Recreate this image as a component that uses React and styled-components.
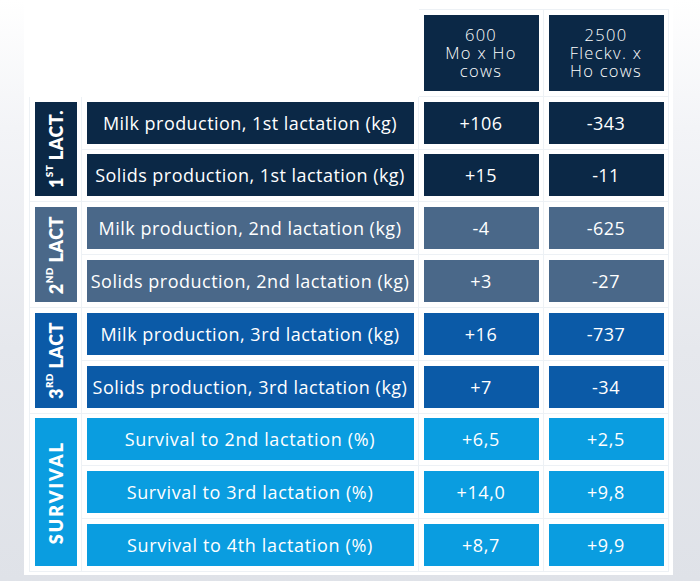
import styled, { createGlobalStyle } from "styled-components";

const GlobalStyle = createGlobalStyle`
  html, body {
    margin: 0;
    padding: 0;
  }
  body {
    width: 700px;
    height: 581px;
    overflow: hidden;
    font-family: "Open Sans", Lato, sans-serif;
    background: linear-gradient(180deg, #ffffff 0%, #f3f4f7 22%, #e6e8ed 60%, #dfe2e8 100%);
  }
`;

const Panel = styled.div`
  margin-left: 24px;
  width: 649px;
  height: 575px;
  box-sizing: border-box;
  padding: 9px 4px 0 5px;
  background: #ffffff;
`;

const Table = styled.table`
  border-collapse: collapse;
  border-spacing: 0;
`;

const Cell = styled.td`
  padding: 4.9px 4.5px;
  border: 1px solid ${(p) => (p.$blank ? "transparent" : "#edf1f5")};
  vertical-align: top;
`;

const HeadBox = styled.div`
  width: 115px;
  height: 76px;
  background: #0b2846;
  color: #ffffff;
  font-weight: 300;
  font-size: 16.5px;
  letter-spacing: 1.3px;
  display: flex;
  flex-direction: column;
  align-items: center;
  justify-content: center;
  text-align: center;

  span {
    display: block;
    line-height: 18px;
  }
`;

const SideBox = styled.div`
  width: 42px;
  height: ${(p) => p.$rows * 42 + (p.$rows - 1) * 10.8}px;
  background: ${(p) => p.$bg};
  display: flex;
  align-items: center;
  justify-content: center;
`;

const SideText = styled.span`
  writing-mode: vertical-rl;
  transform: rotate(180deg);
  color: #ffffff;
  font-family: Lato, "Open Sans", sans-serif;
  font-weight: 800;
  font-size: 18px;
  letter-spacing: ${(p) => p.$spacing || "0.5px"};
  white-space: nowrap;

  sup {
    font-size: 10px;
    font-weight: 800;
    vertical-align: 7px;
    line-height: 0;
    letter-spacing: 0.3px;
  }
`;

const Box = styled.div`
  width: ${(p) => p.$w}px;
  height: 42px;
  background: ${(p) => p.$bg};
  color: #ffffff;
  font-size: 18px;
  letter-spacing: ${(p) => p.$track}px;
  display: flex;
  align-items: center;
  justify-content: center;
  white-space: nowrap;
`;

const groups = [
  {
    bg: "#0b2846",
    side: <>1<sup>ST</sup> LACT.</>,
    track: 0.45,
    rows: [
      ["Milk production, 1st lactation (kg)", "+106", "-343"],
      ["Solids production, 1st lactation (kg)", "+15", "-11"],
    ],
  },
  {
    bg: "#4a6889",
    side: <>2<sup>ND</sup> LACT</>,
    track: 0.5,
    rows: [
      ["Milk production, 2nd lactation (kg)", "-4", "-625"],
      ["Solids production, 2nd lactation (kg)", "+3", "-27"],
    ],
  },
  {
    bg: "#0b5aa7",
    side: <>3<sup>RD</sup> LACT</>,
    track: 0.5,
    rows: [
      ["Milk production, 3rd lactation (kg)", "+16", "-737"],
      ["Solids production, 3rd lactation (kg)", "+7", "-34"],
    ],
  },
  {
    bg: "#0a9de0",
    side: "SURVIVAL",
    spacing: "2px",
    track: 0.65,
    rows: [
      ["Survival to 2nd lactation (%)", "+6,5", "+2,5"],
      ["Survival to 3rd lactation (%)", "+14,0", "+9,8"],
      ["Survival to 4th lactation (%)", "+8,7", "+9,9"],
    ],
  },
];

export default function App() {
  return (
    <>
      <GlobalStyle />
      <Panel>
        <Table>
          <tbody>
            <tr>
              <Cell colSpan={2} $blank />
              <Cell>
                <HeadBox>
                  <span>600</span>
                  <span>Mo x Ho</span>
                  <span>cows</span>
                </HeadBox>
              </Cell>
              <Cell>
                <HeadBox>
                  <span>2500</span>
                  <span>Fleckv. x</span>
                  <span>Ho cows</span>
                </HeadBox>
              </Cell>
            </tr>
            {groups.map((g, gi) =>
              g.rows.map((r, ri) => (
                <tr key={`${gi}-${ri}`}>
                  {ri === 0 && (
                    <Cell rowSpan={g.rows.length}>
                      <SideBox $bg={g.bg} $rows={g.rows.length}>
                        <SideText $spacing={g.spacing}>{g.side}</SideText>
                      </SideBox>
                    </Cell>
                  )}
                  <Cell>
                    <Box $w={327} $bg={g.bg} $track={g.track}>{r[0]}</Box>
                  </Cell>
                  <Cell>
                    <Box $w={115} $bg={g.bg} $track={g.track}>{r[1]}</Box>
                  </Cell>
                  <Cell>
                    <Box $w={115} $bg={g.bg} $track={g.track}>{r[2]}</Box>
                  </Cell>
                </tr>
              ))
            )}
          </tbody>
        </Table>
      </Panel>
    </>
  );
}
